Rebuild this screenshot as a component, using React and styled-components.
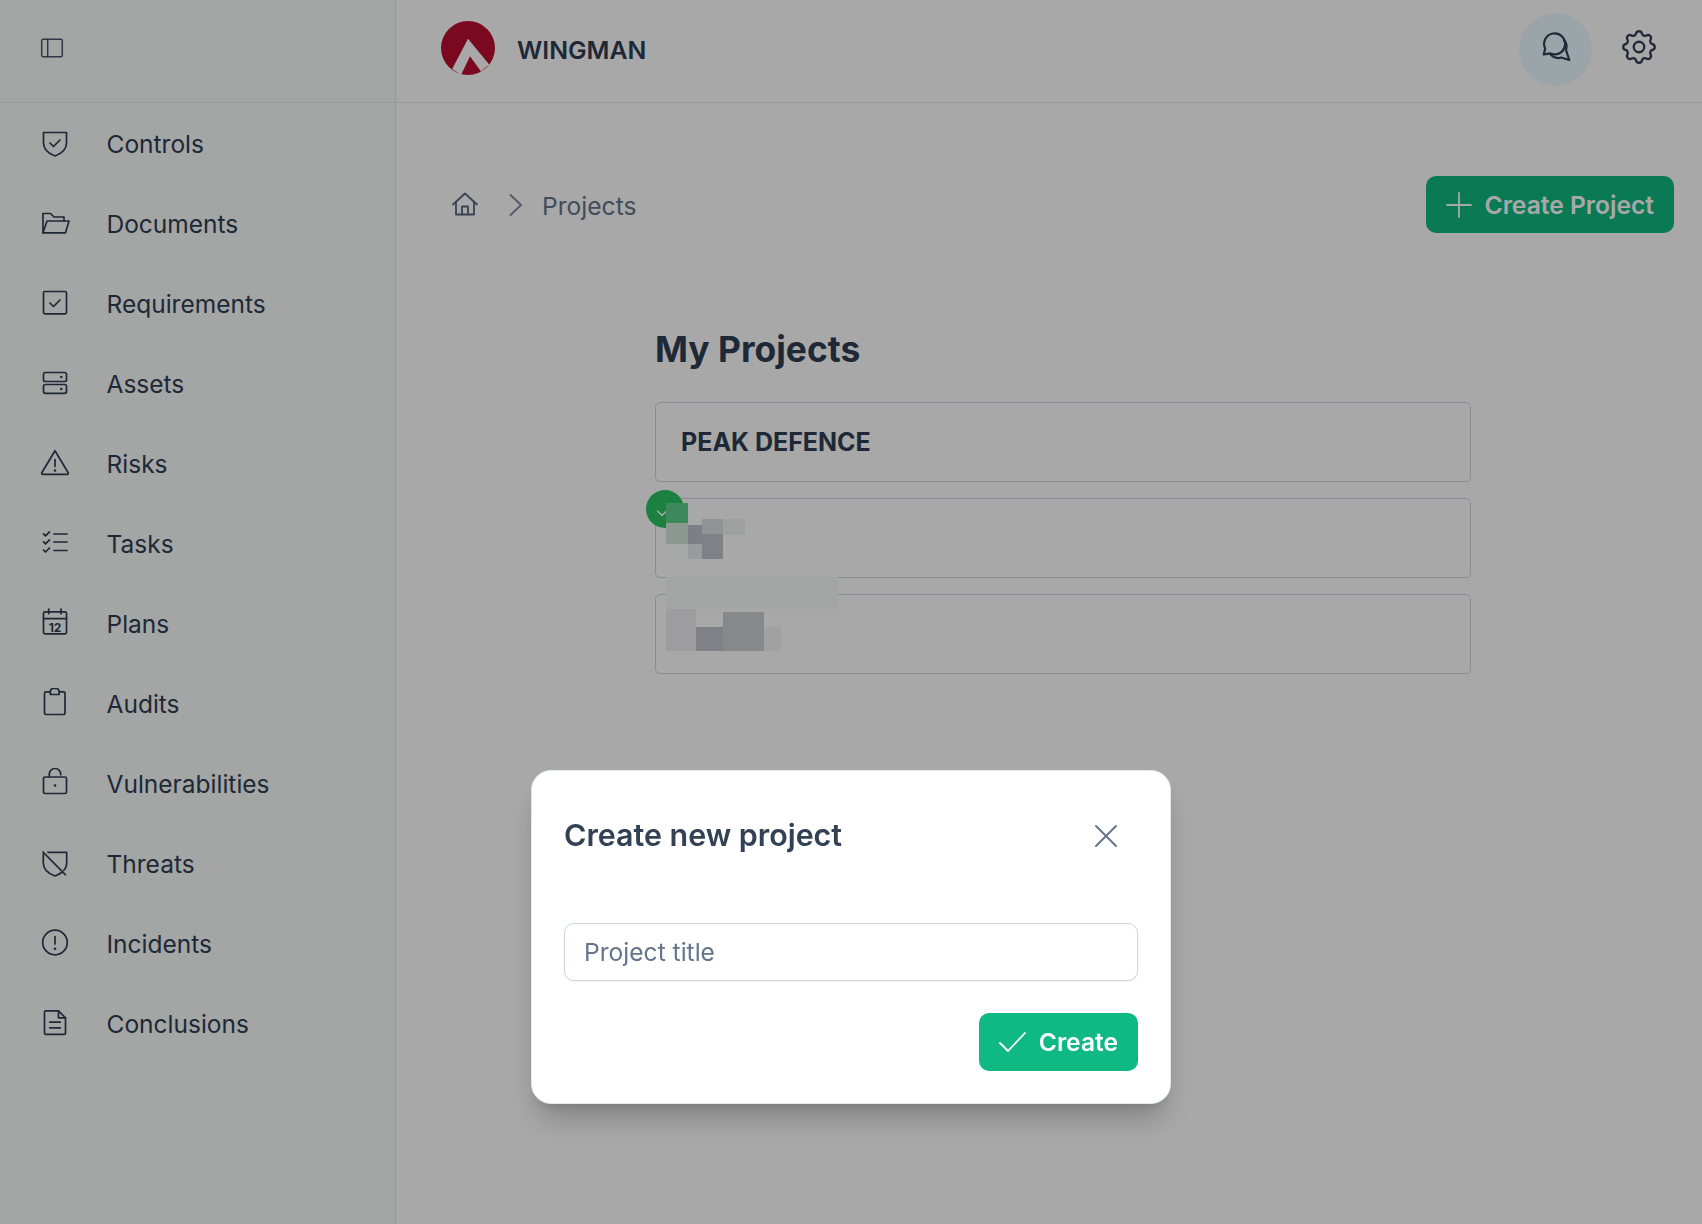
import React from 'react';
import styled, { createGlobalStyle } from 'styled-components';
import { TbSettings } from 'react-icons/tb';

const GlobalStyle = createGlobalStyle`
  html, body {
    margin: 0;
    height: 100%;
    overflow: hidden;
    background: #fff;
    font-family: Inter, "Noto Sans", sans-serif;
    color: #2f3e54;
  }
  * { box-sizing: border-box; }
`;

const Page = styled.div`
  display: flex;
  height: 100vh;
`;

const Sidebar = styled.aside`
  width: 396px;
  flex: none;
  background: #f9fafb;
  border-right: 1px solid #e5e7eb;
`;

const SidebarHead = styled.div`
  height: 103px;
  padding: 0 0 6px 36px;
  display: flex;
  align-items: center;
  color: #475569;
  border-bottom: 1px solid #e5e7eb;
`;

const Nav = styled.nav`
  display: flex;
  flex-direction: column;
  padding-top: 1px;
`;

const NavItem = styled.a`
  height: 80px;
  padding-left: 39px;
  display: flex;
  align-items: center;
  gap: 35.5px;
  font-size: 24.5px;
  color: #2f3e54;
`;

const Main = styled.main`
  flex: 1;
  min-width: 0;
  display: flex;
  flex-direction: column;
`;

const TopBar = styled.header`
  height: 103px;
  padding: 0 42px 6px 45px;
  display: flex;
  align-items: center;
  border-bottom: 1px solid #e5e7eb;
`;

const Brand = styled.div`
  display: flex;
  align-items: center;
  gap: 22px;
  flex: 1;
`;

const BrandName = styled.span`
  margin-top: 4px;
  font-size: 24.8px;
  font-weight: 600;
  color: #2f3e54;
`;

const ChatButton = styled.button`
  width: 73px;
  height: 73px;
  margin: 2px 26px 0 0;
  padding: 0 0 4px;
  border: none;
  border-radius: 50%;
  background: #ecf9ff;
  color: #2f3e54;
  display: flex;
  align-items: center;
  justify-content: center;
`;

const GearButton = styled.button`
  width: 42px;
  height: 42px;
  margin-bottom: 2px;
  padding: 0;
  border: none;
  background: none;
  color: #2f3e54;
  display: flex;
`;

const Toolbar = styled.div`
  margin-top: 73px;
  padding: 0 28px 0 56px;
  display: flex;
  align-items: center;
  justify-content: space-between;
`;

const Crumbs = styled.div`
  display: flex;
  align-items: center;
  font-size: 24.6px;
  color: #56677f;
`;

const CrumbLabel = styled.span`
  margin: 2px 0 0 15px;
  color: #64748b;
`;

const ChevronWrap = styled.span`
  display: flex;
  margin-left: 27px;
  color: #7c8ba1;
`;

const PrimaryButton = styled.button`
  height: ${p => p.$h}px;
  padding: 0 20px;
  border: none;
  border-radius: 10px;
  background: #10b981;
  color: #fff;
  display: flex;
  align-items: center;
  gap: 13px;
  font-family: inherit;
  font-size: 24.6px;
  font-weight: 600;
`;

const Projects = styled.section`
  width: 816px;
  margin: 92px 0 0 259px;
`;

const Heading = styled.h1`
  margin: 0 0 27px;
  font-size: 35.4px;
  line-height: 50px;
  font-weight: 700;
  color: #2f3e54;
`;

const CardList = styled.div`
  display: flex;
  flex-direction: column;
  gap: 16px;
`;

const Card = styled.div`
  position: relative;
  height: 80px;
  padding-left: 25px;
  border: 1px solid #d1d5db;
  border-radius: 5px;
  display: flex;
  align-items: center;
  font-size: 25px;
  font-weight: 700;
  color: #2f3e54;
`;

const Badge = styled.span`
  position: absolute;
  left: -10px;
  top: -9px;
  width: 38px;
  height: 38px;
  padding: 8px 7px 0 0;
  border-radius: 50%;
  background: #2ac361;
  color: #fff;
  display: flex;
  align-items: center;
  justify-content: center;
`;

const Mosaic = styled.svg`
  position: absolute;
  left: 10px;
  top: 4px;
  z-index: 2;
`;

const Overlay = styled.div`
  position: fixed;
  inset: 0;
  z-index: 10;
  background: rgba(0, 0, 0, 0.34);
  display: flex;
  justify-content: center;
  align-items: flex-end;
  padding-bottom: 120px;
`;

const Modal = styled.div`
  width: 640px;
  padding: 32px;
  border: 1px solid #e2e8f0;
  border-radius: 20px;
  background: #fff;
  box-shadow: 0 20px 30px -6px rgba(0, 0, 0, 0.22), 0 8px 12px -6px rgba(0, 0, 0, 0.12);
`;

const ModalHead = styled.div`
  height: 64px;
  padding-right: 16px;
  display: flex;
  align-items: center;
  justify-content: space-between;
`;

const ModalTitle = styled.h2`
  margin: 0;
  font-size: 30.4px;
  font-weight: 600;
  color: #334155;
`;

const CloseButton = styled.button`
  width: 32px;
  height: 32px;
  margin-top: 1px;
  padding: 0;
  border: none;
  background: none;
  color: #64748b;
  display: flex;
`;

const TitleInput = styled.input`
  display: block;
  width: 100%;
  height: 58px;
  margin-top: 56px;
  padding: 0 19px;
  border: 1px solid #cbd5e1;
  border-radius: 10px;
  font-family: inherit;
  font-size: 24.6px;
  outline: none;
  box-shadow: 0 1px 2px rgba(0, 0, 0, 0.05);
  &::placeholder { color: #64748b; opacity: 1; }
`;

const ModalActions = styled.div`
  margin-top: 32px;
  display: flex;
  justify-content: flex-end;
`;

const Icon = ({ size = 32, sw = 1.7, children }) => (
  <svg width={size} height={size} viewBox={`0 0 ${size} ${size}`} fill="none" stroke="currentColor" strokeWidth={sw} strokeLinecap="round" strokeLinejoin="round" style={{ flex: 'none' }}>
    {children}
  </svg>
);

const Dot = ({ x, y, r = 1.3 }) => <circle cx={x} cy={y} r={r} fill="currentColor" stroke="none" />;

const navItems = [
  ['Controls', <><path d="M4.5 4.5H27.5V15C27.5 21.5 22.5 25.5 16 28C9.5 25.5 4.5 21.5 4.5 15Z" /><path d="M11 15l3.5 3.5l6.5-6.5" /></>],
  ['Documents', <><path d="M4 24.8V5.5H11.5L15 9H25V13" /><path d="M4 24.8L8 13H30L26.5 24.8Z" /></>],
  ['Requirements', <><rect x="4.5" y="3.5" width="23" height="22.3" rx="1.5" /><path d="M11 15l3.5 3.5l6.5-6.5" /></>],
  ['Assets', <><rect x="4.5" y="4.5" width="23" height="9" rx="2" /><rect x="4.5" y="16.5" width="23" height="8.8" rx="2" /><Dot x={22.3} y={9} /><Dot x={22.3} y={21} /></>],
  ['Risks', <><path d="M16 2.8L29.2 24.8a1 1 0 0 1-.9 1.5H3.7a1 1 0 0 1-.9-1.5Z" /><path d="M16 11.5V18.5" /><Dot x={16} y={22.5} /></>],
  ['Tasks', <><path d="M15 6H28M15 14H28M15 22.5H28" /><path d="M4.5 5.8l2 2l4-4M4.5 13.8l2 2l4-4M4.5 22l2 2l4-4" /></>],
  ['Plans', <><rect x="4.5" y="3.8" width="23" height="22" rx="1.5" /><path d="M4.5 10.7H27.5M9.7 1V5.7M22 1V5.7" /><text x="16" y="23.5" textAnchor="middle" fontFamily="Inter, sans-serif" fontSize="12" fontWeight="700" fill="currentColor" stroke="none">12</text></>],
  ['Audits', <><path d="M11 3.8H6.9a1.4 1.4 0 0 0-1.4 1.4V25.1a1.4 1.4 0 0 0 1.4 1.4H24.6a1.4 1.4 0 0 0 1.4-1.4V5.2a1.4 1.4 0 0 0-1.4-1.4H20.5" /><path d="M11.4 6.5V3.5a3 3 0 0 1 3-3h2.7a3 3 0 0 1 3 3V6.5Z" /></>],
  ['Vulnerabilities', <><path d="M10.3 9V6.2a5.7 5.7 0 0 1 11.4 0V6.7" /><rect x="4.5" y="9" width="23" height="16.5" rx="1.5" /><Dot x={16} y={17.5} /></>],
  ['Threats', <><path d="M9 4.3H27.7V15c0 3-1 5.5-3 7.5" /><path d="M4.3 6V15C4.3 21 9 25.5 16 28c2.5-1 4.5-2 6.5-3.5" /><path d="M4 4L26.3 26.7" /></>],
  ['Incidents', <><circle cx="16" cy="14.5" r="12.3" /><path d="M16 8.5V16" /><Dot x={16} y={20.8} /></>],
  ['Conclusions', <><path d="M19.5 2.8H6.9a1.4 1.4 0 0 0-1.4 1.4V25a1.4 1.4 0 0 0 1.4 1.4H25.1a1.4 1.4 0 0 0 1.4-1.4V9.8Z" /><path d="M19.5 2.8V9.8H26.5" /><path d="M10.7 14.2H21.3M10.7 19.8H21.3" /></>],
];

// redacted names: the blurred blocks over rows two and three
const mosaic = [
  [0, 0, 22, 20, '#5fd18a'], [0, 20, 22, 21, '#d4e9dc'], [22, 22, 14, 19, '#bdc3cb'],
  [36, 16, 21, 15, '#dddfe3'], [57, 16, 22, 16, '#f2f4f5'], [36, 31, 21, 25, '#c0c5ce'],
  [0, 41, 22, 15, '#fdffff'], [22, 41, 14, 15, '#e9ebee'], [0, 56, 79, 18, '#ffffff'],
  [0, 74, 172, 32, '#f8fbfa'], [0, 106, 30, 42, '#eeeff2'], [30, 124, 27, 24, '#c0c5ce'],
  [57, 109, 41, 39, '#cbd0d3'], [98, 124, 17, 24, '#f4f5f5'],
];

const Logo = () => (
  <svg width="54" height="54" viewBox="0 0 54 54" style={{ flex: 'none' }}>
    <circle cx="27" cy="27" r="27" fill="#b90f30" />
    <path d="M27 17.7L11.2 48L20 54L29 35.3L40 50.5L48.2 43.5Z" fill="#fff" />
  </svg>
);

export default function App() {
  return (
    <>
      <GlobalStyle />
      <Page>
        <Sidebar>
          <SidebarHead>
            <Icon sw={1.5}>
              <rect x="5.7" y="7.2" width="20.6" height="17.6" rx="1.5" />
              <path d="M11.7 7.2V24.8" />
            </Icon>
          </SidebarHead>
          <Nav>
            {navItems.map(([label, glyph]) => (
              <NavItem key={label}>
                <Icon>{glyph}</Icon>
                {label}
              </NavItem>
            ))}
          </Nav>
        </Sidebar>
        <Main>
          <TopBar>
            <Brand>
              <Logo />
              <BrandName>WINGMAN</BrandName>
            </Brand>
            <ChatButton>
              <Icon size={40} sw={2.2}>
                <path d="M7.7 27.5L9.2 21.5A10.5 10.5 0 1 1 14 26.3Z" />
                <path d="M28 13C30.5 16 31 20 30 23L33.3 33L25 30.5C21.5 32 18 31 15 28" />
              </Icon>
            </ChatButton>
            <GearButton>
              <TbSettings size={42} strokeWidth={1.3} />
            </GearButton>
          </TopBar>
          <Toolbar>
            <Crumbs>
              <Icon size={26} sw={1.8}>
                <path d="M1 12.5L13 1.5L25 12.5" />
                <path d="M4 10V22.5H22V10" />
                <path d="M10 22.5V14.5H16V22.5" />
              </Icon>
              <ChevronWrap>
                <Icon size={22} sw={1.9}>
                  <path d="M5.5 1L16 11L5.5 21" />
                </Icon>
              </ChevronWrap>
              <CrumbLabel>Projects</CrumbLabel>
            </Crumbs>
            <PrimaryButton $h={57}>
              <Icon size={26} sw={1.8}>
                <path d="M13 1V25M1 13H25" />
              </Icon>
              Create Project
            </PrimaryButton>
          </Toolbar>
          <Projects>
            <Heading>My Projects</Heading>
            <CardList>
              <Card>PEAK DEFENCE</Card>
              <Card>
                <Badge>
                  <Icon size={12} sw={1.5}>
                    <path d="M1.5 4L6 8.5L10.5 4" />
                  </Icon>
                </Badge>
                <Mosaic width="172" height="148">
                  {mosaic.map(([x, y, w, h, fill]) => (
                    <rect key={`${x}-${y}`} x={x} y={y} width={w} height={h} fill={fill} />
                  ))}
                </Mosaic>
              </Card>
              <Card />
            </CardList>
          </Projects>
        </Main>
      </Page>
      <Overlay>
        <Modal>
          <ModalHead>
            <ModalTitle>Create new project</ModalTitle>
            <CloseButton>
              <Icon sw={1.9}>
                <path d="M6 6L26 26M26 6L6 26" />
              </Icon>
            </CloseButton>
          </ModalHead>
          <TitleInput placeholder="Project title" />
          <ModalActions>
            <PrimaryButton $h={58}>
              <Icon size={27} sw={1.8}>
                <path d="M1 14L9 22L26 4" />
              </Icon>
              Create
            </PrimaryButton>
          </ModalActions>
        </Modal>
      </Overlay>
    </>
  );
}
